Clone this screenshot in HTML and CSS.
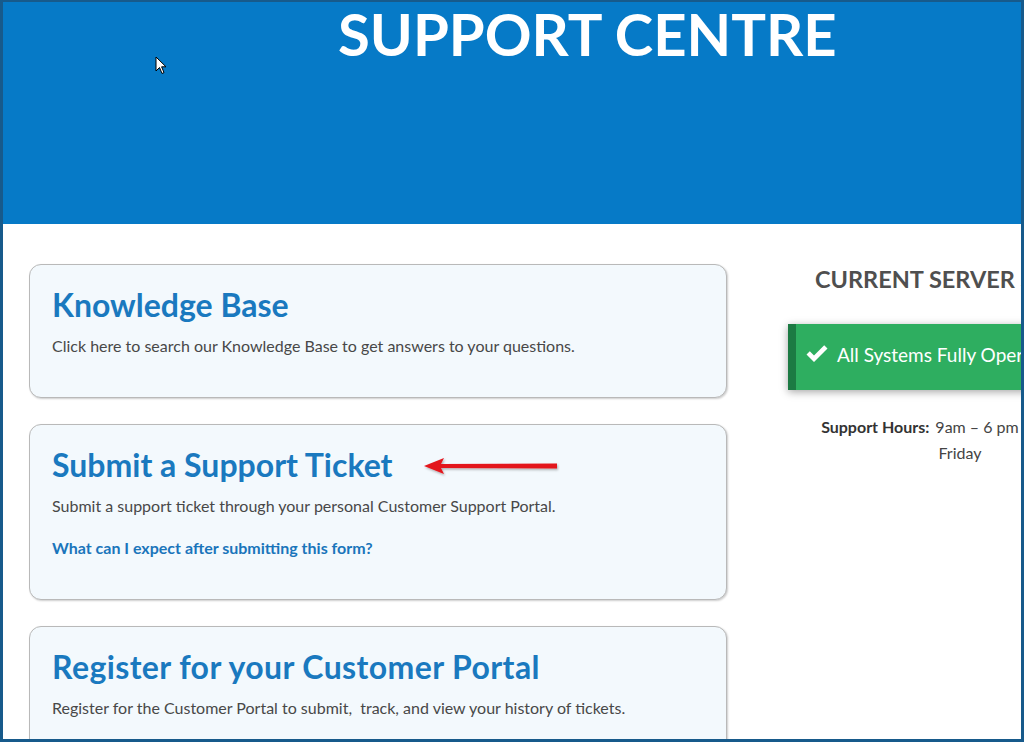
FILE: index.html
```html
<!DOCTYPE html>
<html lang="en">
<head>
<meta charset="UTF-8" />
<meta name="viewport" content="width=device-width, initial-scale=1" />
<title>Support Centre</title>
<link rel="stylesheet" href="styles.css">
</head>
<body>

<div class="frame">
  <header class="hero">
    <h1 class="hero-title">SUPPORT CENTRE</h1>
    <!-- mouse pointer caught in the screenshot -->
    <svg class="cursor" width="12" height="19" viewBox="0 0 12 19" aria-hidden="true">
      <path d="M1 1 L1 15 L4.5 11.5 L7 17.5 L9 16.6 L6.6 10.8 L11 10.8 Z" fill="#fff" stroke="#000" stroke-width="1" stroke-linejoin="round"/>
    </svg>
  </header>

  <main class="content">
    <div class="cards">
      <section class="card">
        <h2 class="card-title">Knowledge Base</h2>
        <p class="card-text">Click here to search our Knowledge Base to get answers to your questions.</p>
      </section>

      <section class="card card-ticket">
        <h2 class="card-title">Submit a Support Ticket</h2>
        <p class="card-text">Submit a support ticket through your personal Customer Support Portal.</p>
        <a href="#" class="card-link">What can I expect after submitting this form?</a>
        <!-- red annotation arrow -->
        <svg class="arrow" width="140" height="24" viewBox="0 0 140 24" aria-hidden="true">
          <defs>
            <filter id="arrowShadow" x="-10%" y="-50%" width="120%" height="200%">
              <feDropShadow dx="1" dy="1.5" stdDeviation="1" flood-color="#000" flood-opacity="0.3"/>
            </filter>
          </defs>
          <g filter="url(#arrowShadow)" fill="#e3161b">
            <path d="M2 11 L22 3 L19 9 L135 8.6 L135 13.4 L19 13 L22 19 Z"/>
          </g>
        </svg>
      </section>

      <section class="card">
        <h2 class="card-title card-title-wide">Register for your Customer Portal</h2>
        <p class="card-text">Register for the Customer Portal to submit,&nbsp; track, and view your history of tickets.</p>
      </section>
    </div>

    <aside class="status">
      <h3 class="status-title">CURRENT SERVER STATUS</h3>
      <div class="status-box">
        <svg class="status-check" width="24" height="20" viewBox="0 0 24 20" aria-hidden="true">
          <path d="M1.5 10.5 L4.8 7.2 L9 11.4 L19.2 1.2 L22.5 4.5 L9 18 Z" fill="#fff"/>
        </svg>
        <span>All Systems Fully Operational</span>
      </div>
      <p class="hours"><strong>Support Hours:</strong>9am – 6 pm Monday to Friday</p>
    </aside>
  </main>
</div>

</body>
</html>
```

FILE: styles.css
```css
body {
  margin: 0;
  font-family: Lato, "Open Sans", Arial, sans-serif;
  background: #fff;
}

.frame {
  width: 1024px;
  height: 742px;
  box-sizing: border-box;
  border: 3px solid #175a8b;
  border-top-width: 2px;
  overflow: hidden;
  position: relative;
}

.hero {
  height: 222px;
  background: #067ac7;
  padding-left: 335px;
  position: relative;
}

.hero-title {
  margin: 0;
  padding-top: 2px;
  font-size: 58px;
  line-height: 60px;
  font-weight: 700;
  color: #fff;
  white-space: nowrap;
}

.cursor {
  position: absolute;
  left: 152px;
  top: 54px;
}

/* Main area */
.content {
  display: flex;
  gap: 61px;
  padding: 40px 0 0 26px;
}

.cards {
  flex: 0 0 698px;
  display: flex;
  flex-direction: column;
  gap: 26px;
}

.card {
  background: #f3f9fd;
  border: 1px solid #b9b9b9;
  border-radius: 12px;
  padding: 21px 23px 20px 22px;
  box-shadow: 1px 1px 2px rgba(0, 0, 0, 0.2);
  position: relative;
}

.card-title {
  margin: 0 0 10px;
  font-size: 32px;
  line-height: 38px;
  font-weight: 700;
  color: #1a79bf;
  white-space: nowrap;
}

.card-title-wide {
  letter-spacing: 0.4px;
}

.card-text {
  margin: 0 0 19px;
  font-size: 16px;
  line-height: 24px;
  color: #484848;
}

.card-link {
  display: block;
  margin: -1px 0 19px;
  font-size: 16px;
  line-height: 24px;
  font-weight: 700;
  color: #1a75bb;
  text-decoration: none;
}

.arrow {
  position: absolute;
  left: 392px;
  top: 30px;
}

/* Server status column */
.status {
  flex: 0 0 344px;
  text-align: center;
}

.status-title {
  margin: 0;
  font-size: 23.5px;
  line-height: 30px;
  font-weight: 700;
  color: #4f4f4f;
  white-space: nowrap;
}

.status-box {
  margin-top: 30px;
  height: 66px;
  box-sizing: border-box;
  display: flex;
  align-items: center;
  gap: 8px;
  padding: 0 0 6px 9px;
  background: #2eae60;
  border-left: 8px solid #1c7a43;
  box-shadow: 0 2px 8px rgba(0, 0, 0, 0.35);
  color: #fff;
  font-size: 19px;
  white-space: nowrap;
}

.status-check {
  flex-shrink: 0;
}

.hours {
  margin: 24px 0 0;
  padding: 0 30px;
  font-size: 16px;
  line-height: 26px;
  color: #444;
}

.hours strong {
  color: #333;
  margin-right: 6px;
}
```
